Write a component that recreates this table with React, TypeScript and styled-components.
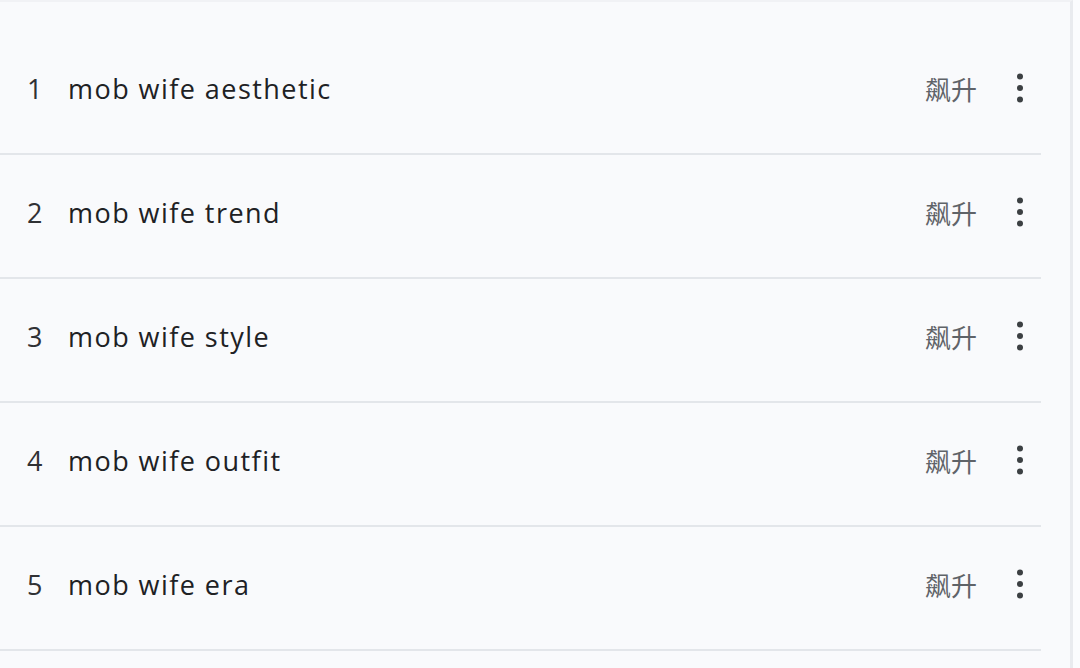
import styled, { createGlobalStyle } from "styled-components";

const GlobalStyle = createGlobalStyle`
  html, body {
    margin: 0;
    padding: 0;
    background: #ffffff;
  }
  body {
    font-family: "Open Sans", "Noto Sans CJK SC", sans-serif;
  }
`;

const Page = styled.div`
  width: 1080px;
  height: 668px;
  overflow: hidden;
  background: #fbfcfe;
`;

const Card = styled.div`
  width: 1073px;
  height: 100%;
  padding-top: 29px;
  box-sizing: border-box;
  background: #f9fafc;
  border-top: 2px solid #f1f2f5;
  border-right: 3px solid #e9ebef;
`;

const List = styled.ul`
  margin: 0;
  padding: 0;
  list-style: none;
  width: 1041px;
`;

const Row = styled.li`
  display: flex;
  align-items: center;
  box-sizing: border-box;
  height: 124px;
  padding: 0 9px 8px 27px;
  border-bottom: 2px solid #e3e6ea;
`;

const Rank = styled.span`
  width: 41px;
  font-size: 27px;
  color: #303134;
`;

const Term = styled.span`
  flex: 1;
  font-size: 27px;
  color: #202124;
  letter-spacing: 1.45px;
`;

const Trend = styled.span`
  font-family: "Noto Sans CJK SC", sans-serif;
  font-size: 26px;
  color: #5f6368;
  margin-right: 31px;
`;

const MoreBtn = styled.button`
  display: flex;
  align-items: center;
  justify-content: center;
  width: 24px;
  height: 40px;
  padding: 0;
  border: 0;
  background: none;
  cursor: pointer;
`;

const terms = [
  "mob wife aesthetic",
  "mob wife trend",
  "mob wife style",
  "mob wife outfit",
  "mob wife era",
];

function MoreIcon() {
  return (
    <svg width="8" height="32" viewBox="0 0 8 32">
      <circle cx="4" cy="4.5" r="3" fill="#3c4043" />
      <circle cx="4" cy="16" r="3" fill="#3c4043" />
      <circle cx="4" cy="27.5" r="3" fill="#3c4043" />
    </svg>
  );
}

export default function App() {
  return (
    <>
      <GlobalStyle />
      <Page>
        <Card>
          <List>
            {terms.map((term, i) => (
              <Row key={term}>
                <Rank>{i + 1}</Rank>
                <Term>{term}</Term>
                <Trend>飙升</Trend>
                <MoreBtn aria-label="more">
                  <MoreIcon />
                </MoreBtn>
              </Row>
            ))}
          </List>
        </Card>
      </Page>
    </>
  );
}
